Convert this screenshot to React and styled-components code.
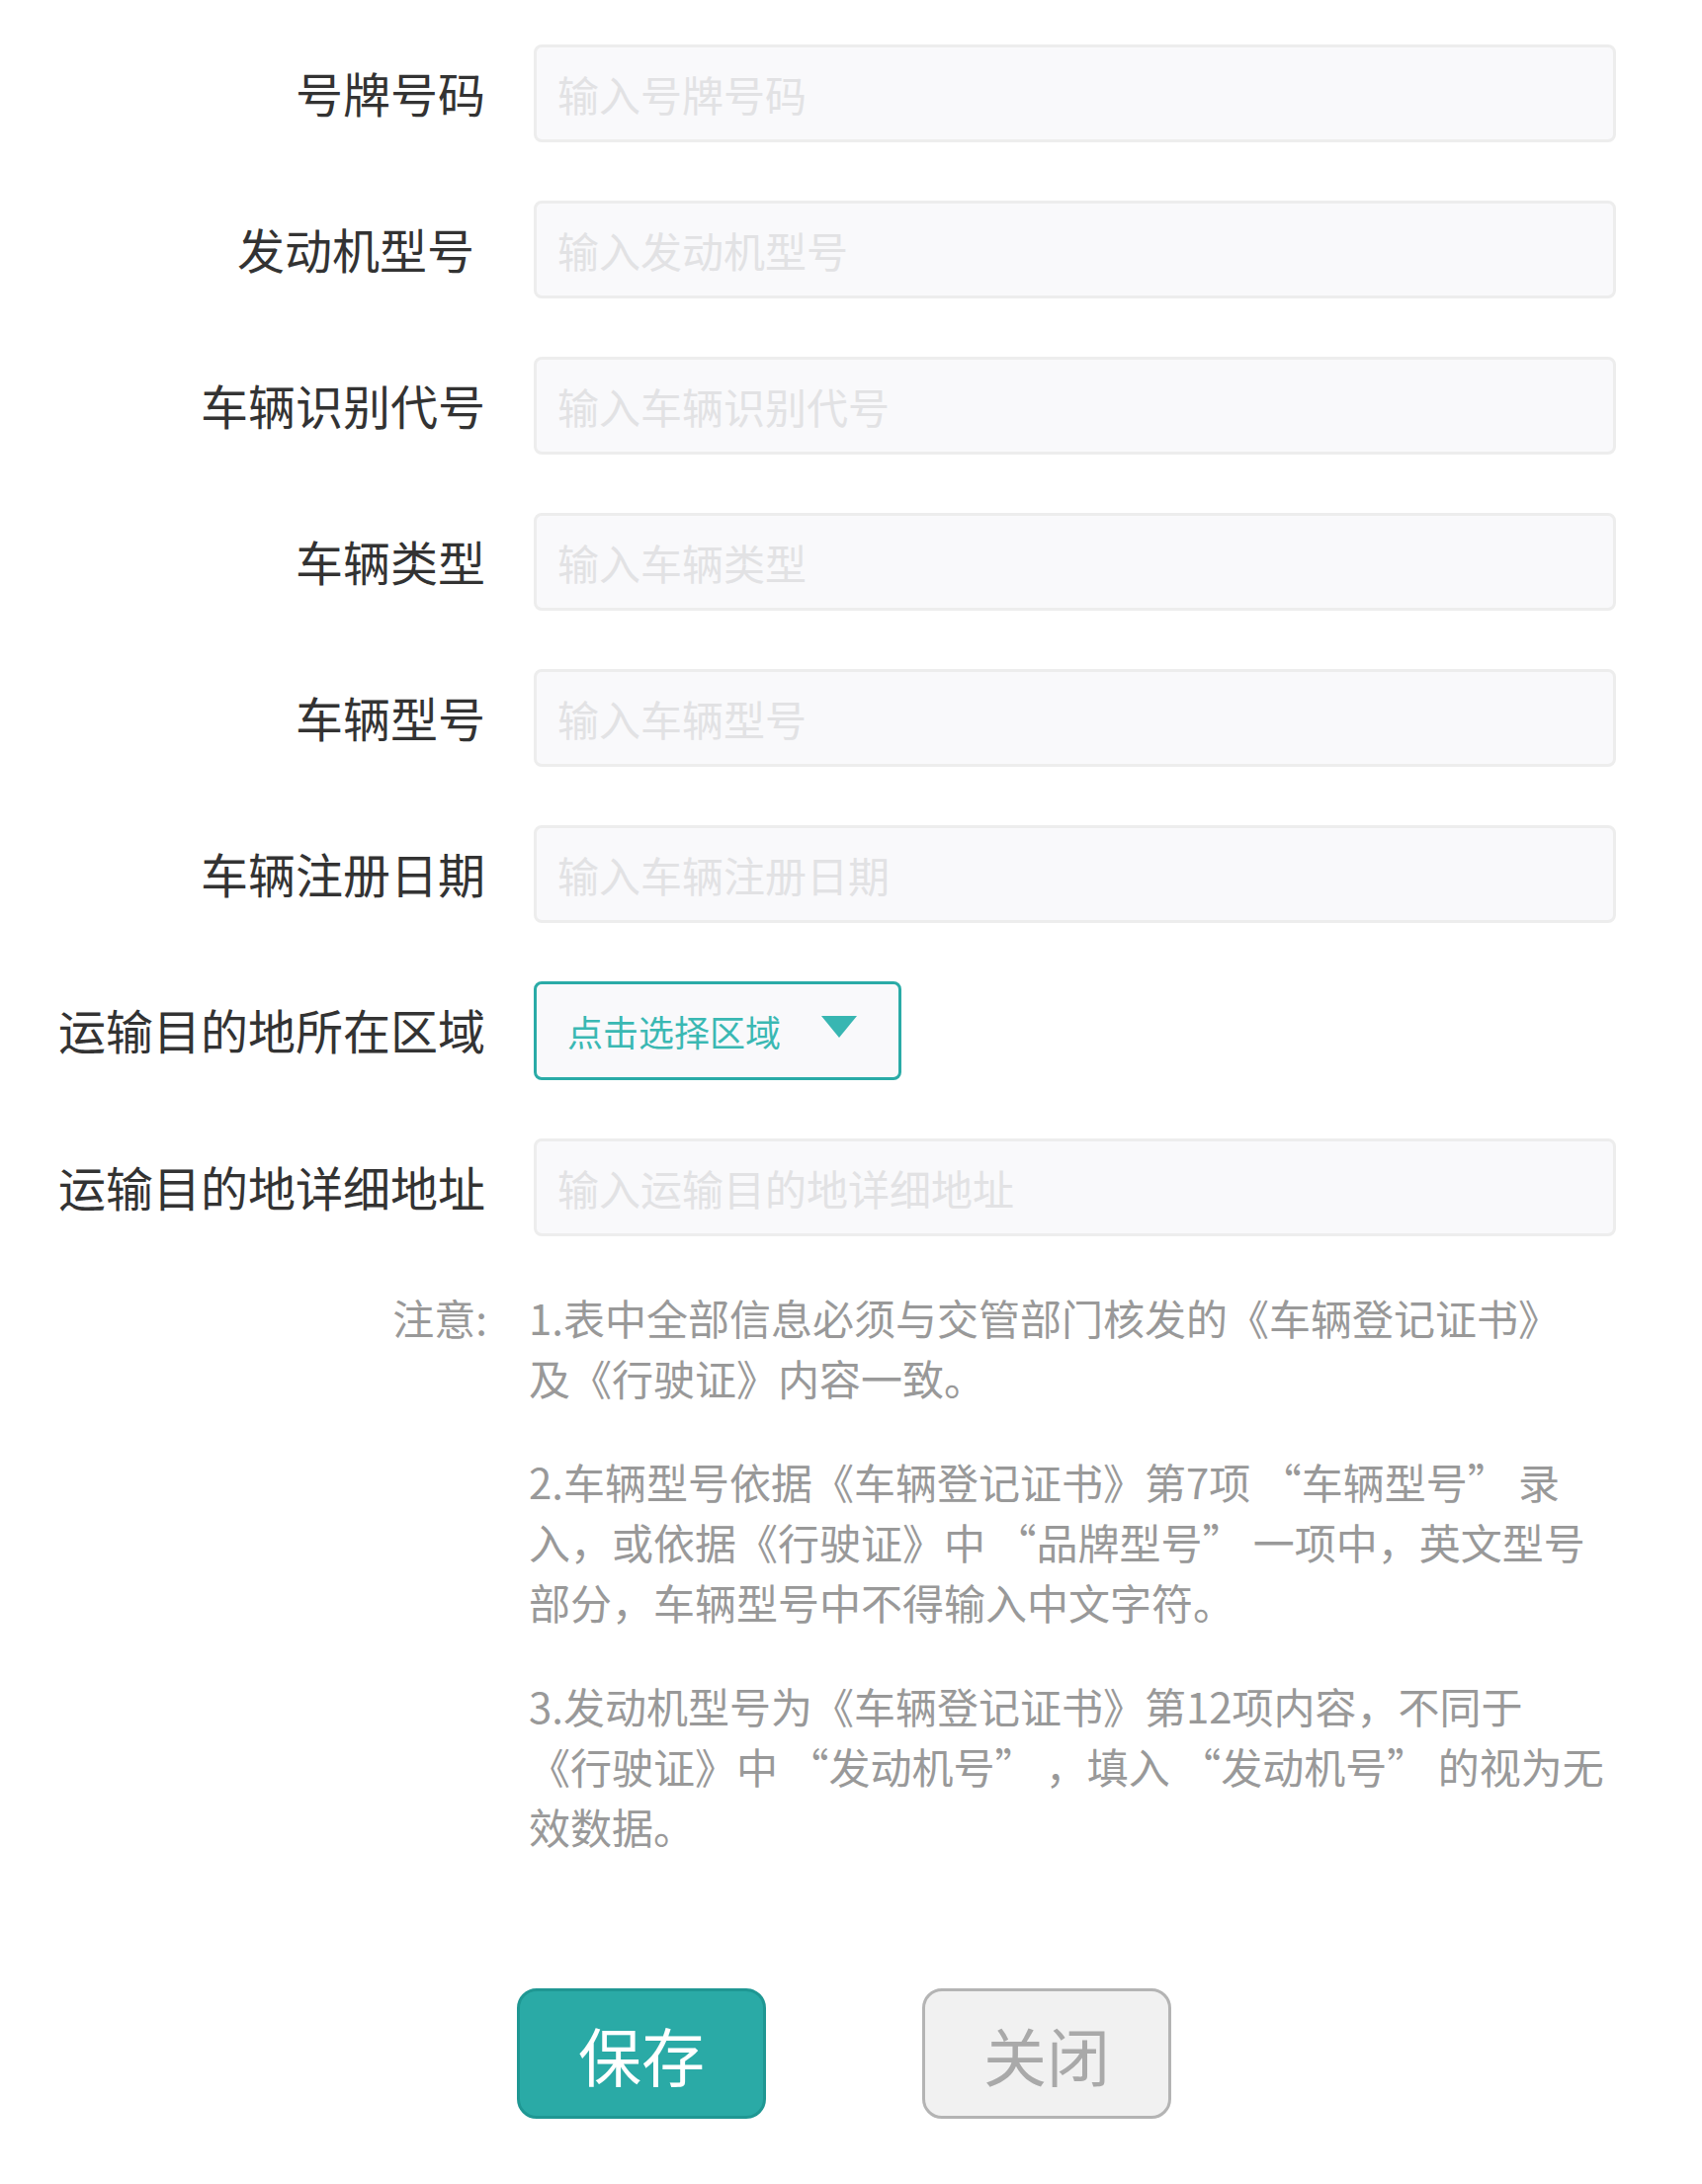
import styled, { createGlobalStyle } from "styled-components";

const GlobalStyle = createGlobalStyle`
  html, body {
    margin: 0;
    padding: 0;
    background: #ffffff;
  }
  body {
    font-family: "Noto Sans CJK SC", "Noto Sans", sans-serif;
  }
  * {
    box-sizing: border-box;
  }
`;

const Page = styled.div`
  min-height: 2210px;
  padding-top: 45px;
`;

const Form = styled.form`
  display: flex;
  flex-direction: column;
  gap: 59px;
`;

const Row = styled.div`
  display: flex;
  align-items: center;
  gap: 47px;
`;

const Label = styled.label`
  width: 493px;
  flex-shrink: 0;
  padding-right: ${(props) => props.$inset || 2}px;
  padding-bottom: 4px;
  text-align: right;
  font-size: 48px;
  line-height: 1;
  color: #333333;
  white-space: nowrap;
`;

const Input = styled.input`
  width: 1095px;
  height: 99px;
  padding: 0 21px;
  border: 3px solid #ededed;
  border-radius: 8px;
  background: #f9f9fb;
  font-family: inherit;
  font-size: 42px;
  color: #333333;
  outline: none;

  &::placeholder {
    color: #e2e2e4;
  }
`;

const Select = styled.button`
  display: flex;
  align-items: center;
  gap: 41px;
  width: 372px;
  height: 100px;
  padding: 0 0 0 31px;
  border: 3px solid #2aaba7;
  border-radius: 8px;
  background: #f9f9fb;
  font-family: inherit;
  font-size: 36px;
  color: #3ab8b3;
  cursor: pointer;
`;

const Caret = styled.span`
  width: 0;
  height: 0;
  border-left: 18px solid transparent;
  border-right: 18px solid transparent;
  border-top: 22px solid #38b6b2;
  margin-top: -8px;
`;

const Notes = styled.div`
  display: flex;
  gap: 42px;
  margin-top: 51px;
  color: #999999;
  font-size: 42px;
  line-height: 61px;
`;

const NotesTitle = styled.div`
  width: 493px;
  flex-shrink: 0;
  text-align: right;
`;

const NotesBody = styled.div`
  display: flex;
  flex-direction: column;
  gap: 44px;
`;

const Note = styled.p`
  margin: 0;
  white-space: nowrap;
`;

const Actions = styled.div`
  display: flex;
  gap: 158px;
  margin-top: 134px;
  padding-left: 523px;
`;

const Button = styled.button`
  width: 252px;
  height: 132px;
  border-radius: 20px;
  border: 3px solid ${(props) => (props.$primary ? "#1f9793" : "#b4b4b4")};
  background: ${(props) => (props.$primary ? "#2aaaa6" : "#f1f1f1")};
  color: ${(props) => (props.$primary ? "#ffffff" : "#a9a9a9")};
  font-family: inherit;
  font-size: 64px;
  line-height: 1;
  cursor: pointer;
`;

const fields = [
  { label: "号牌号码", placeholder: "输入号牌号码" },
  { label: "发动机型号", placeholder: "输入发动机型号", inset: 13 },
  { label: "车辆识别代号", placeholder: "输入车辆识别代号" },
  { label: "车辆类型", placeholder: "输入车辆类型" },
  { label: "车辆型号", placeholder: "输入车辆型号" },
  { label: "车辆注册日期", placeholder: "输入车辆注册日期" },
];

const App = () => {
  return (
    <Page>
      <GlobalStyle />
      <Form onSubmit={(e) => e.preventDefault()}>
        {fields.map((field) => (
          <Row key={field.label}>
            <Label $inset={field.inset}>{field.label}</Label>
            <Input placeholder={field.placeholder} />
          </Row>
        ))}
        <Row>
          <Label>运输目的地所在区域</Label>
          <Select type="button">
            点击选择区域
            <Caret />
          </Select>
        </Row>
        <Row>
          <Label>运输目的地详细地址</Label>
          <Input placeholder="输入运输目的地详细地址" />
        </Row>
      </Form>

      <Notes>
        <NotesTitle>注意:</NotesTitle>
        <NotesBody>
          <Note>
            1.表中全部信息必须与交管部门核发的《车辆登记证书》
            <br />
            及《行驶证》内容一致。
          </Note>
          <Note>
            2.车辆型号依据《车辆登记证书》第7项 “车辆型号” 录
            <br />
            入，或依据《行驶证》中 “品牌型号” 一项中，英文型号
            <br />
            部分，车辆型号中不得输入中文字符。
          </Note>
          <Note>
            3.发动机型号为《车辆登记证书》第12项内容，不同于
            <br />
            《行驶证》中 “发动机号” ，填入 “发动机号” 的视为无
            <br />
            效数据。
          </Note>
        </NotesBody>
      </Notes>

      <Actions>
        <Button type="button" $primary>
          保存
        </Button>
        <Button type="button">关闭</Button>
      </Actions>
    </Page>
  );
};

export default App;
